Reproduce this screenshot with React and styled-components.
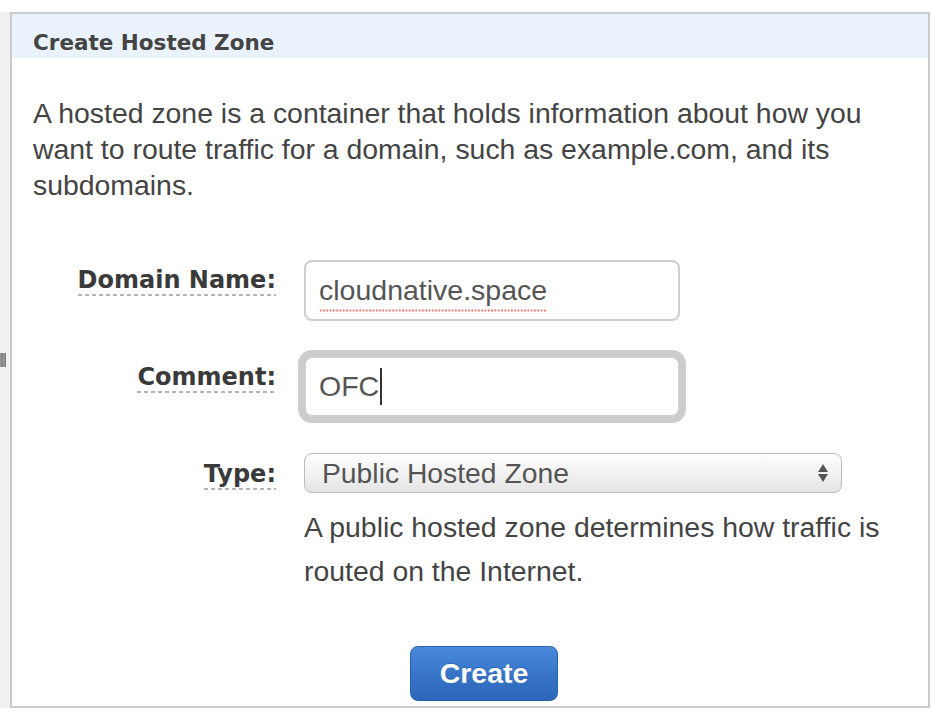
import React from 'react';
import styled, { createGlobalStyle } from 'styled-components';

const GlobalStyle = createGlobalStyle`
  body {
    margin: 0;
    background: #fff;
    font-family: "Liberation Sans", Arial, sans-serif;
  }
`;

const Page = styled.div`
  display: flex;
  padding-top: 12px;
  height: 696px;
`;

const Gutter = styled.div`
  width: 10px;
  background: #f0f0f0;
  display: flex;
  align-items: center;
`;

const Grip = styled.div`
  width: 6px;
  height: 14px;
  background: linear-gradient(
    to right,
    #9a9a9a 0,
    #7a7a7a 3px,
    #b8b8b8 4px,
    #6e6e6e 5px,
    #8c8c8c 6px
  );
`;

const Panel = styled.div`
  width: 916px;
  border: 2px solid #cbcbcb;
  display: flex;
  flex-direction: column;
`;

const Header = styled.div`
  box-sizing: border-box;
  height: 44px;
  background: #eaf2fb;
  padding: 16px 21px 0;
  font-family: "DejaVu Sans", Verdana, sans-serif;
  font-weight: bold;
  font-size: 21.5px;
  line-height: 25px;
  color: #444;
`;

const Body = styled.div`
  padding: 37px 21px 0;
`;

const Intro = styled.p`
  margin: 0;
  font-size: 28.4px;
  line-height: 36px;
  color: #444;
`;

const Form = styled.div`
  display: grid;
  grid-template-columns: 243px 1fr;
  column-gap: 28px;
  margin-top: 57px;
`;

const LabelCell = styled.div`
  text-align: right;
  padding-top: ${(p) => p.$top}px;
  margin-top: ${(p) => p.$gap || 0}px;
`;

const Label = styled.span`
  display: inline-block;
  font-family: "DejaVu Sans", Verdana, sans-serif;
  font-weight: bold;
  font-size: 24px;
  line-height: 28px;
  color: #3a3a3a;
  padding-bottom: 2px;
  background: repeating-linear-gradient(
      to right,
      #b4b4b4 0 4px,
      transparent 4px 7px
    )
    bottom / 100% 2px no-repeat;
`;

const FieldCell = styled.div`
  margin-top: ${(p) => p.$gap || 0}px;
`;

const TextBox = styled.div`
  box-sizing: border-box;
  width: 376px;
  height: 61px;
  border: 2px solid #cfcfcf;
  border-radius: 8px;
  box-shadow: ${(p) => (p.$focused ? '0 0 0 6px #cdcdcd' : 'none')};
  padding: 0 13px;
  display: flex;
  align-items: center;
  font-size: 28.5px;
  color: #555;
  background: #fff;
`;

const Misspelled = styled.span`
  padding-bottom: 5px;
  margin-bottom: -5px;
  background: radial-gradient(circle, #f07a72 0.9px, transparent 1.3px)
    left bottom / 3.3px 3px repeat-x;
`;

const Caret = styled.span`
  display: inline-block;
  width: 2px;
  height: 37px;
  background: #333;
  margin-left: 1px;
`;

const Select = styled.div`
  box-sizing: border-box;
  width: 538px;
  height: 40px;
  border: 1px solid #bcbcbc;
  border-radius: 8px;
  background: linear-gradient(to bottom, #fefefe, #f2f2f2 50%, #e4e4e4);
  box-shadow: inset 0 1px 0 #fff;
  padding: 0 12px 0 17px;
  display: flex;
  align-items: center;
  justify-content: space-between;
  font-size: 28.3px;
  color: #555;
`;

const Arrows = styled.svg`
  width: 12px;
  height: 24px;
`;

const Hint = styled.p`
  margin: 12px 0 0;
  font-size: 28.4px;
  line-height: 44px;
  color: #444;
  width: 600px;
`;

const ButtonRow = styled.div`
  padding: 53px 0 0 377px;
`;

const Button = styled.button`
  width: 148px;
  height: 55px;
  border: 1px solid #2b5fae;
  border-radius: 8px;
  background: linear-gradient(to bottom, #4a8bdb, #3775c9 50%, #2c66b8);
  color: #fff;
  font-family: "Liberation Sans", Arial, sans-serif;
  font-weight: bold;
  font-size: 28.5px;
  text-shadow: 0 -1px 0 rgba(0, 0, 0, 0.2);
  padding: 0;
`;

export default function App() {
  return (
    <>
      <GlobalStyle />
      <Page>
        <Gutter>
          <Grip />
        </Gutter>
        <Panel>
          <Header>Create Hosted Zone</Header>
          <Body>
            <Intro>
              A hosted zone is a container that holds information about how you
              want to route traffic for a domain, such as example.com, and its
              subdomains.
            </Intro>
            <Form>
              <LabelCell $top={6}>
                <Label>Domain Name:</Label>
              </LabelCell>
              <FieldCell>
                <TextBox>
                  <Misspelled>cloudnative.space</Misspelled>
                </TextBox>
              </FieldCell>

              <LabelCell $top={7} $gap={35}>
                <Label>Comment:</Label>
              </LabelCell>
              <FieldCell $gap={35}>
                <TextBox $focused>
                  OFC
                  <Caret />
                </TextBox>
              </FieldCell>

              <LabelCell $top={7} $gap={36}>
                <Label>Type:</Label>
              </LabelCell>
              <FieldCell $gap={36}>
                <Select>
                  <span>Public Hosted Zone</span>
                  <Arrows viewBox="0 0 12 24">
                    <path d="M6 3 L11 11 L1 11 Z" fill="#555" />
                    <path d="M6 21 L11 13 L1 13 Z" fill="#555" />
                  </Arrows>
                </Select>
                <Hint>
                  A public hosted zone determines how traffic is routed on the
                  Internet.
                </Hint>
              </FieldCell>
            </Form>
            <ButtonRow>
              <Button>Create</Button>
            </ButtonRow>
          </Body>
        </Panel>
      </Page>
    </>
  );
}
